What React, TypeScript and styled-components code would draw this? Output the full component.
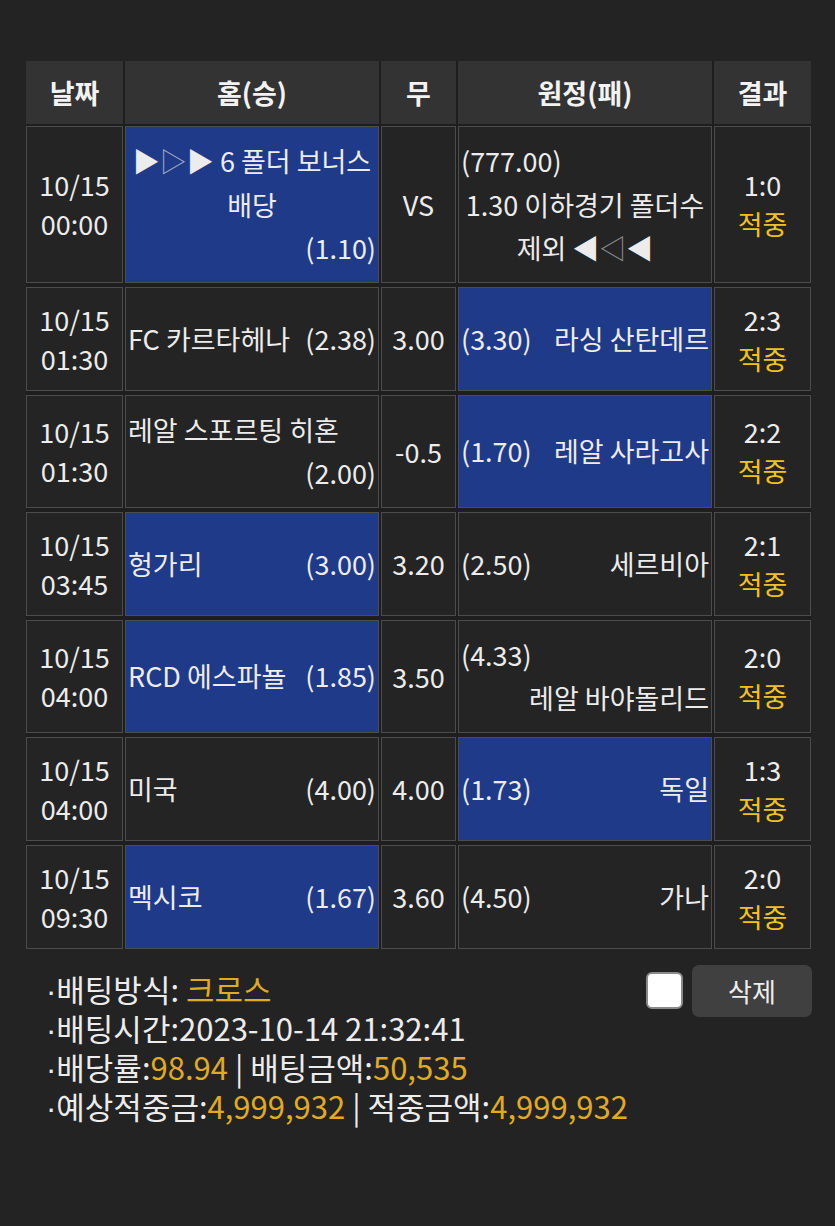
import React from 'react';
import styled, { createGlobalStyle } from 'styled-components';

const GlobalStyle = createGlobalStyle`
  html, body {
    margin: 0;
    padding: 0;
    background: #232323;
  }
  body {
    font-family: "Noto Sans CJK KR", "Noto Sans", sans-serif;
    color: #ececec;
  }
`;

// Layout
const Page = styled.div`
  padding: 61px 24px 40px 26px;
  min-height: 1226px;
  box-sizing: border-box;
`;

const Grid = styled.div`
  display: grid;
  grid-template-columns: 97px 254px 75px 254px 97px;
  column-gap: 2px;
  row-gap: 4px;
  width: 785px;
  background: #1e1e1e;
`;

const HeadCell = styled.div`
  height: 63px;
  background: #333333;
  display: flex;
  align-items: center;
  justify-content: center;
  font-size: 27px;
  font-weight: 700;
  color: #f2f2f2;
  margin-bottom: -2px;
`;

const Cell = styled.div<{ $blue?: boolean }>`
  box-sizing: border-box;
  border: 1px solid #4c4c4c;
  background: ${(p) => (p.$blue ? '#1f3a88' : '#242424')};
  padding: 12px 2px;
  display: flex;
  align-items: center;
  justify-content: center;
  font-size: 27px;
  color: #ececec;
`;

const Stack = styled.div`
  text-align: center;
  line-height: 39px;
`;

const Hit = styled.div`
  color: #f1c21d;
`;

const Team = styled.div`
  width: 100%;
  display: flex;
  flex-wrap: wrap;
  align-items: center;
  column-gap: 8px;
  line-height: 43.5px;
`;

const Name = styled.span<{ $right?: boolean }>`
  text-align: center;
  word-break: keep-all;
  ${(p) => (p.$right ? 'margin-left: auto;' : '')}
`;

const Odds = styled.span<{ $right?: boolean }>`
  white-space: nowrap;
  ${(p) => (p.$right ? 'margin-left: auto;' : '')}
`;

const Arrow = styled.span<{ $hollow?: boolean; $dim?: string }>`
  color: ${(p) => (p.$hollow ? p.$dim || '#9aa6c8' : 'inherit')};
`;

// Summary
const Footer = styled.div`
  display: flex;
  justify-content: space-between;
  align-items: flex-start;
  width: 786px;
  margin-top: 16px;
`;

const Info = styled.div`
  padding-left: 20px;
  padding-top: 4px;
  font-size: 31px;
  color: #ececec;
`;

const Line = styled.div`
  height: 39px;
  line-height: 39px;
  white-space: nowrap;
`;

const Dot = styled.span`
  font-family: "Liberation Sans", sans-serif;
  line-height: 0;
`;

const Gold = styled.span`
  color: #e0aa22;
`;

const Controls = styled.div`
  display: flex;
  align-items: center;
  gap: 9px;
`;

const Check = styled.div`
  width: 37px;
  height: 37px;
  box-sizing: border-box;
  background: #ffffff;
  border: 2px solid #8a8a8a;
  border-radius: 6px;
`;

const DeleteBtn = styled.button`
  width: 120px;
  height: 52px;
  border: none;
  border-radius: 7px;
  background: #404040;
  color: #eeeeee;
  font-family: "Noto Sans CJK KR", sans-serif;
  font-size: 26px;
`;

type Row = {
  date: string;
  time: string;
  home: React.ReactNode;
  homeOdds: string;
  homeBlue?: boolean;
  draw: string;
  away: React.ReactNode;
  awayOdds: string;
  awayBlue?: boolean;
  score: string;
};

const rows: Row[] = [
  {
    date: '10/15',
    time: '00:00',
    home: (
      <>
        <Arrow>▶</Arrow>
        <Arrow $hollow>▷</Arrow>
        <Arrow>▶</Arrow> 6 폴더 보너스 배당
      </>
    ),
    homeOdds: '(1.10)',
    homeBlue: true,
    draw: 'VS',
    away: (
      <>
        1.30 이하경기 폴더수 제외 <Arrow>◀</Arrow>
        <Arrow $hollow $dim="#8c8c8c">◁</Arrow>
        <Arrow>◀</Arrow>
      </>
    ),
    awayOdds: '(777.00)',
    score: '1:0',
  },
  { date: '10/15', time: '01:30', home: 'FC 카르타헤나', homeOdds: '(2.38)', draw: '3.00', away: '라싱 산탄데르', awayOdds: '(3.30)', awayBlue: true, score: '2:3' },
  { date: '10/15', time: '01:30', home: '레알 스포르팅 히혼', homeOdds: '(2.00)', draw: '-0.5', away: '레알 사라고사', awayOdds: '(1.70)', awayBlue: true, score: '2:2' },
  { date: '10/15', time: '03:45', home: '헝가리', homeOdds: '(3.00)', homeBlue: true, draw: '3.20', away: '세르비아', awayOdds: '(2.50)', score: '2:1' },
  { date: '10/15', time: '04:00', home: 'RCD 에스파뇰', homeOdds: '(1.85)', homeBlue: true, draw: '3.50', away: '레알 바야돌리드', awayOdds: '(4.33)', score: '2:0' },
  { date: '10/15', time: '04:00', home: '미국', homeOdds: '(4.00)', draw: '4.00', away: '독일', awayOdds: '(1.73)', awayBlue: true, score: '1:3' },
  { date: '10/15', time: '09:30', home: '멕시코', homeOdds: '(1.67)', homeBlue: true, draw: '3.60', away: '가나', awayOdds: '(4.50)', score: '2:0' },
];

export default function App() {
  return (
    <>
      <GlobalStyle />
      <Page>
        <Grid>
          <HeadCell>날짜</HeadCell>
          <HeadCell>홈(승)</HeadCell>
          <HeadCell>무</HeadCell>
          <HeadCell>원정(패)</HeadCell>
          <HeadCell>결과</HeadCell>
          {rows.map((r, i) => (
            <React.Fragment key={i}>
              <Cell>
                <Stack>
                  {r.date}
                  <br />
                  {r.time}
                </Stack>
              </Cell>
              <Cell $blue={r.homeBlue}>
                <Team>
                  <Name>{r.home}</Name>
                  <Odds $right>{r.homeOdds}</Odds>
                </Team>
              </Cell>
              <Cell>{r.draw}</Cell>
              <Cell $blue={r.awayBlue}>
                <Team>
                  <Odds>{r.awayOdds}</Odds>
                  <Name $right>{r.away}</Name>
                </Team>
              </Cell>
              <Cell>
                <Stack>
                  {r.score}
                  <Hit>적중</Hit>
                </Stack>
              </Cell>
            </React.Fragment>
          ))}
        </Grid>
        <Footer>
          <Info>
            <Line>
              <Dot>·</Dot>배팅방식: <Gold>크로스</Gold>
            </Line>
            <Line>
              <Dot>·</Dot>배팅시간:2023-10-14 21:32:41
            </Line>
            <Line>
              <Dot>·</Dot>배당률:<Gold>98.94</Gold> | 배팅금액:<Gold>50,535</Gold>
            </Line>
            <Line>
              <Dot>·</Dot>예상적중금:<Gold>4,999,932</Gold> | 적중금액:<Gold>4,999,932</Gold>
            </Line>
          </Info>
          <Controls>
            <Check />
            <DeleteBtn>삭제</DeleteBtn>
          </Controls>
        </Footer>
      </Page>
    </>
  );
}
